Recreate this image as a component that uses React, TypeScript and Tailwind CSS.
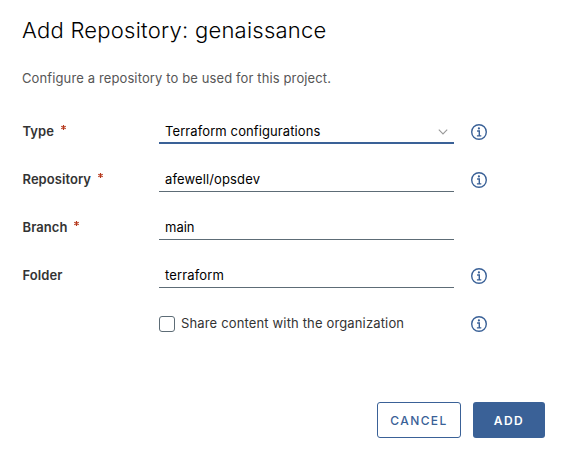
import type { ReactNode } from "react";

function InfoIcon() {
  return (
    <svg viewBox="0 0 16 16" className="ml-[17px] size-4 shrink-0" fill="none" stroke="#3a6197">
      <circle cx="8" cy="8" r="7.3" strokeWidth="1.4" />
      <circle cx="7.9" cy="4.4" r="1.1" fill="#3a6197" stroke="none" />
      <path d="M6.1 7h2.2v5M5.9 11.9h4.4" strokeWidth="1.4" />
    </svg>
  );
}

type RowProps = { label?: string; required?: boolean; info?: boolean; children: ReactNode };

function Row({ label, required, info, children }: RowProps) {
  return (
    <div className="flex h-12 items-start">
      <div className="flex h-6 w-[136px] shrink-0 items-center text-[13px] font-semibold text-[#333]">
        {label && <span className="-ml-[0.5px] tracking-[0.06px]">{label}</span>}
        {required && (
          <svg viewBox="0 0 6 6" className="mb-[9px] ml-[7px] size-[5px]" stroke="#b5371b" strokeWidth="1.4">
            <path d="M3 0v6M.3 1.5l5.4 3M5.7 1.5l-5.4 3" />
          </svg>
        )}
      </div>
      {children}
      {info && (
        <div className="flex h-6 items-center">
          <InfoIcon />
        </div>
      )}
    </div>
  );
}

const field = "flex h-6 w-[295px] items-center border-b border-[#5d6c76] px-[6px] text-[13px] text-black";

export default function App() {
  return (
    <main className="h-[456px] w-[569px] overflow-hidden bg-white pl-[23px] pr-6 pt-[14px] font-['Inter',sans-serif]">
      <h1 className="-ml-px h-8 whitespace-nowrap text-[22px] font-[350] leading-8 tracking-[0.25px] text-black">
        Add Repository: genaissance
      </h1>
      <p className="-ml-px mt-[22px] h-5 whitespace-nowrap text-[13px] leading-5 tracking-[0.12px] text-[#565656]">
        Configure a repository to be used for this project.
      </p>
      <div className="mt-8">
        <Row label="Type" required info>
          <div className="flex h-6 w-[295px] items-center justify-between border-b-2 border-[#3a6197] px-[6px] pt-px text-[13px] text-black">
            <span className="tracking-[0.1px]">Terraform configurations</span>
            <svg viewBox="0 0 10 6" className="h-[6px] w-[10px]" fill="none" stroke="#999" strokeWidth="1.1">
              <path d="M.8.7 5 4.9 9.2.7" />
            </svg>
          </div>
        </Row>
        <Row label="Repository" required info>
          <div className={field}><span className="tracking-[0.13px]">afewell/opsdev</span></div>
        </Row>
        <Row label="Branch" required>
          <div className={field}><span>main</span></div>
        </Row>
        <Row label="Folder" info>
          <div className={field}><span className="tracking-[0.15px]">terraform</span></div>
        </Row>
        <Row info>
          <label className="flex h-6 w-[295px] items-center text-[13px] text-[#333]">
            <input type="checkbox" className="mr-[6px] size-4 appearance-none rounded-[3px] border border-[#5d6c76]" />
            <span className="tracking-[0.15px]">Share content with the organization</span>
          </label>
        </Row>
      </div>
      <div className="mt-[42px] flex justify-end gap-3 text-[12px] font-medium">
        <button className="h-9 w-[84px] rounded-[3px] border border-[#3a6197] px-0 pt-px text-[#3a6197]">
          <span className="tracking-[1.4px]">CANCEL</span>
        </button>
        <button className="h-9 w-[72px] rounded-[3px] bg-[#3a6197] px-0 pt-px font-semibold text-white">
          <span className="tracking-[1.4px]">ADD</span>
        </button>
      </div>
    </main>
  );
}
